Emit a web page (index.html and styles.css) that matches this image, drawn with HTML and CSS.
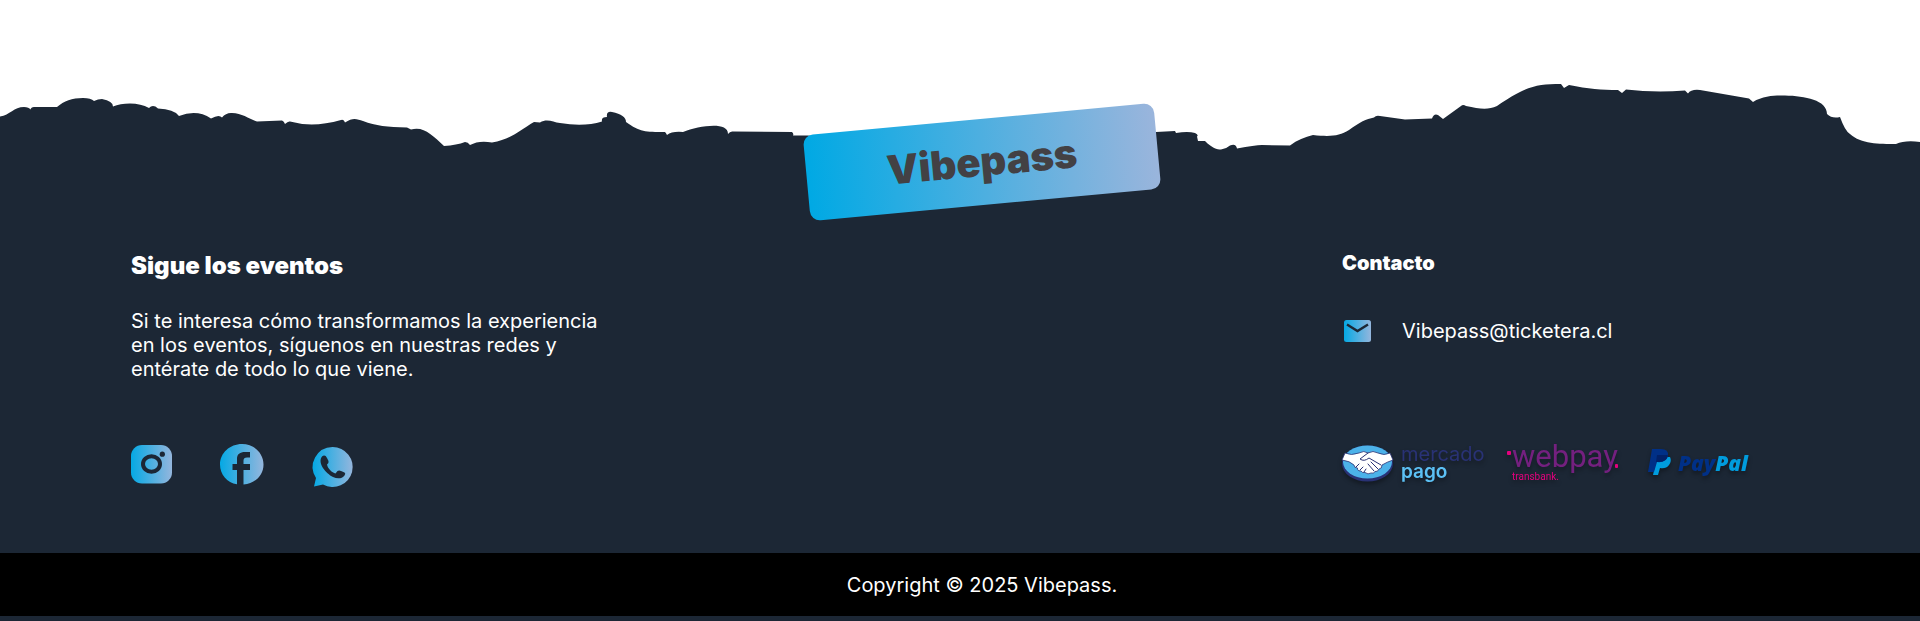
FILE: index.html
```html
<!DOCTYPE html>
<html lang="es">
<head>
<meta charset="utf-8">
<meta name="viewport" content="width=device-width, initial-scale=1">
<title>Vibepass</title>
<link rel="stylesheet" href="styles.css">
</head>
<body>
<footer class="footer">
  <div class="ridge">
    <svg class="ridge-shape" viewBox="0 0 1920 160" preserveAspectRatio="none" aria-hidden="true">
      <path d="M0 116.5C10 115 14 107 24 107Q29 107 30.500 109.500Q31 107 34 107H57C64 101 72 98 83 98Q91 98 94 101Q98 99 102 99Q113 101 113 106.500Q120 103.500 130 103.500Q141 103.500 149 108Q153 104 158 108.500Q174 109 179 116Q197 109 211 118.500Q219 114 222 117.500Q226 112.500 232 113C242 113 249 119 257 121.500L282 120.500Q284 121 285 124Q288 121 290 121.500Q313 128 341 120Q344 119 345 122.500C353 117 357 119 363 121C376 126 387 127 407 127.500L411 129.500C424 126 432 135 444 146Q457 145 465 142Q468 142 470 145Q479 140 492 142.500C512 139 520 130 534 122L540 122.500C547 118 553 122 560 123Q584 127 602 121.500Q601 117 607 117Q606 111 612 112Q626 115 626 122C640 132 645 132 665 132Q666 133 667 135Q672 131 683 132C699 126 728 121 728 134Q730 131 733 131.500L792 132Q794 134 793 135.500H808L980 165L1156 132L1175 131L1176 133Q1188 131 1195 133Q1199 135 1197 136.500L1198 141H1205C1212 148 1217 149.500 1221 149.500Q1226 149 1230 145.500Q1236 143 1237 148.500Q1255 145 1262 145L1290 145.500C1297 140 1305 137 1313 135C1331 137 1339 136 1349 130C1360 122 1366 119 1374 117.500Q1376 115 1380 116L1405 119.500L1432 118.500Q1434 113 1438 115L1443 119L1461 106Q1463 104 1466 106C1480 109 1488 110 1497 106C1506 100 1512 96 1520 92C1534 85 1544 84 1561 84L1564 88L1569 85C1588 89 1602 90 1618 90L1622 93L1626 89.500Q1655 93 1685 90.500L1688 93.500Q1691 89 1700 90L1749 98.500L1753 102C1764 95 1778 95.500 1785 95.500C1805 96 1827 100 1827 114Q1832 119 1840 117Q1845 131 1850 134C1861 144 1879 144 1896 144Q1905 140 1920 142V160H0Z"/>
    </svg>
    <div class="badge">Vibepass</div>
  </div>

  <div class="columns">
    <section class="column">
      <h2 class="title">Sigue los eventos</h2>
      <p class="about">Si te interesa cómo transformamos la experiencia en los eventos, síguenos en nuestras redes y entérate de todo lo que viene.</p>
      <nav class="social" aria-label="Redes sociales">
        <a href="#" aria-label="Instagram">
          <svg width="41" height="42" viewBox="0 0 41 42">
            <defs><linearGradient id="brand"><stop stop-color="#05a9e4"/><stop offset="1" stop-color="#94b6dd"/></linearGradient></defs>
            <rect y="1" width="41" height="38.500" rx="11" fill="url(#brand)"/>
            <ellipse cx="20.500" cy="20" rx="8.500" ry="7.800" fill="none" stroke="#1c2735" stroke-width="4"/>
            <circle cx="31.300" cy="10.200" r="2.600" fill="#1c2735"/>
          </svg>
        </a>
        <a href="#" aria-label="Facebook">
          <svg width="44" height="42" viewBox="0 0 44 42">
            <path fill="url(#brand)" d="M22 0C10 0 0 9 0 20.400C0 30.500 7 38.500 17 40.300V26H12.500V20H17V15C17 10 20 8 25 8H30V13.500H27Q23.500 13.500 23.500 16.500V20H30V26H23.500V40.500C35 39.500 43.500 31.500 43.500 20.400C43.500 9 34 0 22 0Z"/>
          </svg>
        </a>
        <a href="#" aria-label="WhatsApp">
          <svg class="whatsapp" width="41" height="41" viewBox="0 0 41 41">
            <path fill="url(#brand)" d="M20.500 0A20 20 0 1 1 11 37.500L2 39.500L4 31A20 20 0 0 1 20.500 0Z"/>
            <path fill="#1c2735" d="M10 9.500Q13 7 15 11L16.500 14Q17 16 15 17.500C16 22 20 25.500 23.500 26.500L25.500 24Q27 23 29 24L32.500 25.500Q34 26.500 32.500 28.500C30 32 25 32 21 30C14 26.500 5 16 10 9.500Z"/>
          </svg>
        </a>
      </nav>
    </section>

    <section class="column">
      <h2 class="title title-small">Contacto</h2>
      <a class="mail" href="mailto:Vibepass@ticketera.cl">
        <svg width="28" height="22" viewBox="0 0 28 22" aria-hidden="true">
          <rect width="27" height="22" rx="2.500" fill="url(#brand)"/>
          <path d="M3 4.500L13.500 11L24 4.500" fill="none" stroke="#1c2735" stroke-width="2.400"/>
        </svg>
        <span>Vibepass@ticketera.cl</span>
      </a>
      <div class="payments">
        <svg class="logo" width="144" height="42" viewBox="0 0 144 42" role="img" aria-label="Mercado Pago">
          <ellipse cx="25.500" cy="19.500" rx="25.500" ry="18" fill="#293275"/>
          <ellipse cx="25.500" cy="18" rx="24.500" ry="16.500" fill="#4cb2e9"/>
          <path fill="#fff" stroke="#293275" stroke-width=".8" stroke-linejoin="round" d="M3 9Q9 12 17 9Q22 6 26 9Q31 6 36 9Q42 12 48 9L51 16Q45 18 40 21Q40 25 37 25Q36 28 33 27.500Q32 30 29 29Q26 31 23 28.500Q20 29 19 27Q15 27 15.500 24Q12 24 12 21Q8 17 0 16Z"/>
          <path fill="none" stroke="#293275" stroke-width="1" stroke-linecap="round" d="M26 9L18 15Q22 18 27 14L39 21M29 18L36 25M26 20L32 27M14 23L17 20M18 26L21 23M22 28L24 25"/>
          <text class="mercado" x="59" y="17">mercado</text>
          <text class="pago" x="59" y="34">pago</text>
        </svg>
        <svg class="logo" width="121" height="42" viewBox="0 0 121 42" role="img" aria-label="Webpay Transbank">
          <rect x="0" y="7" width="4" height="4" rx="1" fill="#e5007e"/>
          <text class="webpay" x="5" y="23">webpay</text>
          <rect x="108" y="20" width="3" height="4" rx="1" fill="#e5007e"/>
          <text class="transbank" x="5" y="36">transbank.</text>
        </svg>
        <svg class="logo" width="104" height="42" viewBox="0 0 104 42" role="img" aria-label="PayPal">
          <path fill="#009cde" d="M8 13H21Q23 17 20 21Q17 25 11 24L9 31H4Z"/>
          <path fill="#003087" d="M3 5H12Q20 5 19 12Q17 19 8 18L5 28H-1Z"/>
          <path fill="#012169" d="M8 11H19Q18 18 10 18H7Z"/>
          <text class="paypal" x="29" y="27"><tspan fill="#003087">Pay</tspan><tspan fill="#009cde">Pal</tspan></text>
        </svg>
      </div>
    </section>
  </div>

  <div class="copyright">Copyright © 2025 Vibepass.</div>
</footer>
</body>
</html>
```
FILE: styles.css
```css
* {
  box-sizing: border-box;
}

body {
  margin: 0;
  background: #fff;
  color: #fff;
  font-family: Inter, "Liberation Sans", sans-serif;
  font-size: 20px;
  font-weight: 400;
  line-height: 24px;
}

a {
  color: inherit;
  text-decoration: none;
}

svg {
  display: block;
  overflow: visible;
}

.footer {
  background: #1c2735;
  padding-bottom: 5px;
}

.ridge {
  position: relative;
  background: #fff;
}

.ridge-shape {
  width: 100%;
  height: 160px;
  fill: #1c2735;
}

.badge {
  position: absolute;
  left: calc(50% - 154px);
  top: 119px;
  width: 352px;
  padding: 19px 0;
  border-radius: 10px;
  background: linear-gradient(90deg, #00a9e4, #9ab5dc);
  color: #434144;
  font-size: 40px;
  font-weight: 900;
  line-height: 48px;
  text-align: center;
  transform: rotate(-5.3deg);
}

.columns {
  display: grid;
  grid-template-columns: minmax(0, 1fr) 491px;
  padding: 91px 87px 67px 131px;
}

.column {
  display: grid;
  grid-template-rows: 58px 135px 42px;
}

.title {
  margin: 0;
  font-size: 24px;
  font-weight: 900;
  line-height: 29px;
}

.title-small {
  font-size: 20px;
  line-height: 24px;
}

.about {
  margin: 0;
  max-width: 480px;
}

.social {
  display: flex;
  gap: 48px;
}

.whatsapp {
  margin-top: 3px;
}

.mail {
  display: flex;
  align-items: center;
  align-self: start;
  gap: 30px;
  padding: 10px 2px;
}

.payments {
  display: flex;
  gap: 21px;
}

.logo {
  filter: drop-shadow(0 3px 2px #0005);
}

.mercado {
  fill: #293275;
  font-size: 20px;
  font-weight: 400;
}

.pago {
  fill: #5cc1f5;
  font-size: 19px;
  font-weight: 600;
}

.webpay {
  fill: #74207f;
  font-family: Roboto, sans-serif;
  font-size: 31px;
  font-weight: 400;
}

.transbank {
  fill: #e5007e;
  font-family: Roboto, sans-serif;
  font-size: 10px;
  font-weight: 400;
}

.paypal {
  font-family: "Open Sans", sans-serif;
  font-size: 21px;
  font-style: italic;
  font-weight: 800;
}

.copyright {
  padding: 20px 0 19px 44px;
  background: #000;
  text-align: center;
}
```
